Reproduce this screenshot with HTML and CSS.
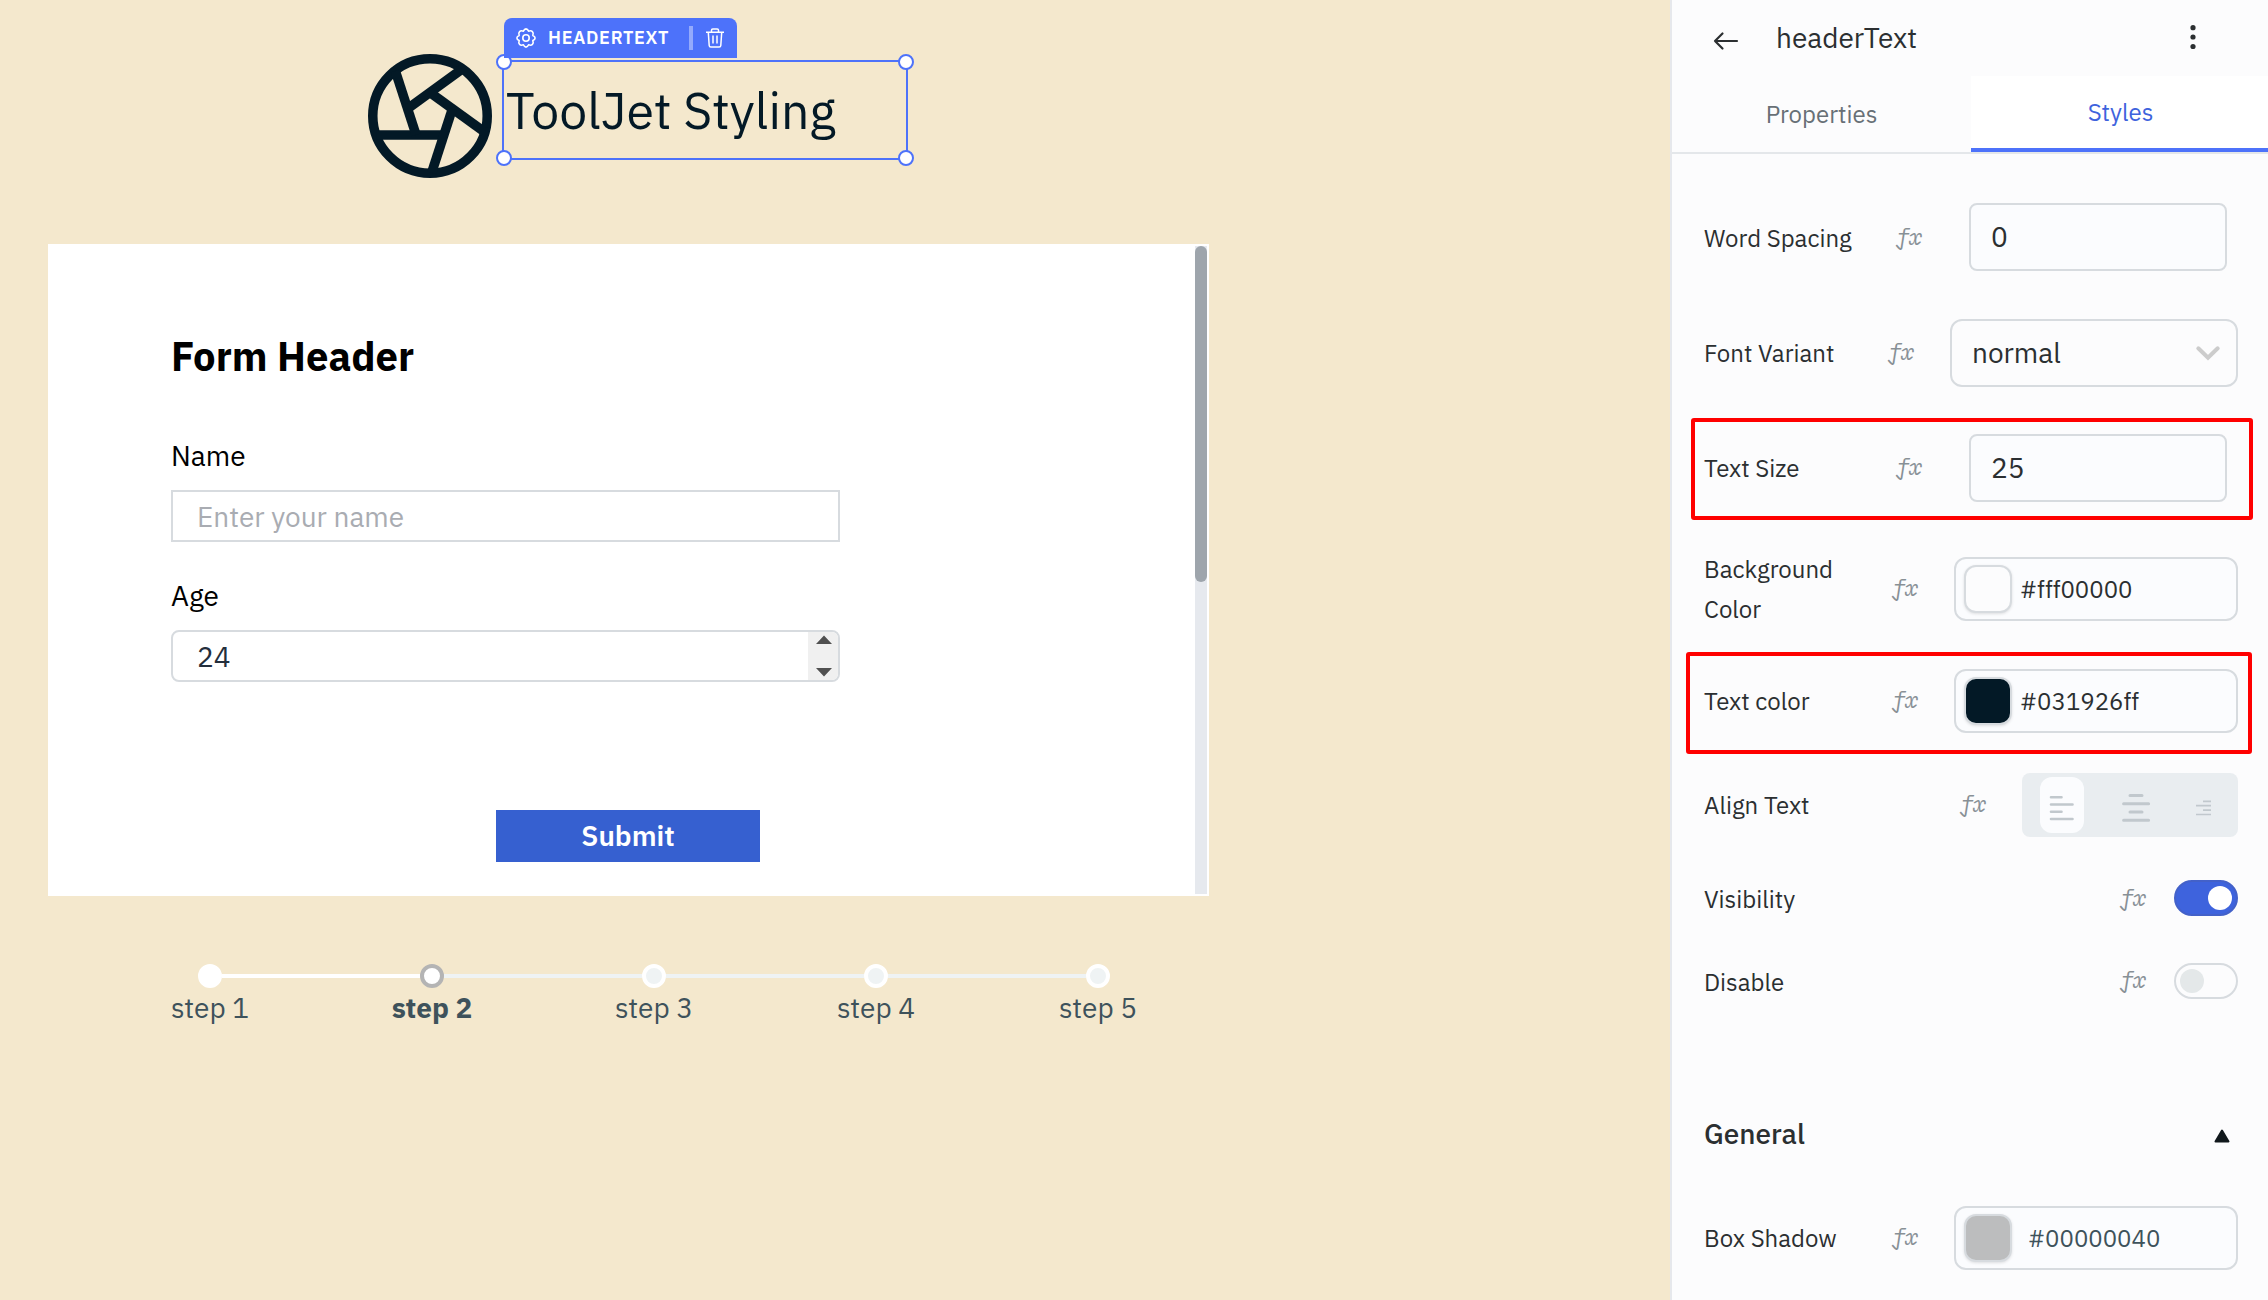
FILE: index.html
```html
<!DOCTYPE html>
<html lang="en">
<head>
<meta charset="utf-8">
<title>ToolJet Styling</title>
<link rel="stylesheet" href="styles.css">
</head>
<body>
<div class="app">
  <main class="canvas">
    <header class="brand">
      <svg class="brand-icon" viewBox="2.25 2.25 19.5 19.5" fill="none" stroke="#031926" stroke-width="1.5" stroke-linecap="butt">
        <circle cx="12" cy="12" r="9"/>
        <path d="M3.6 15h10.55"/>
        <path d="M3.6 15h10.55" transform="rotate(72 12 12)"/>
        <path d="M3.6 15h10.55" transform="rotate(144 12 12)"/>
        <path d="M3.6 15h10.55" transform="rotate(216 12 12)"/>
        <path d="M3.6 15h10.55" transform="rotate(288 12 12)"/>
      </svg>
      <div class="widget">
        <h1 class="widget-text">ToolJet Styling</h1>
        <span class="handle handle-tl"></span>
        <span class="handle handle-tr"></span>
        <span class="handle handle-bl"></span>
        <span class="handle handle-br"></span>
        <div class="tag">
          <svg class="tag-gear" viewBox="0 0 20 20" fill="none" stroke="#fff" stroke-width="1.6" stroke-linejoin="round">
            <path d="M10 .9Q11.600 1 12.600 3.200 15 2.200 16.400 3.600 17.800 5 16.800 7.400 19.100 8.400 19.100 10 19.100 11.600 16.800 12.600 17.800 15 16.400 16.400 15 17.800 12.600 16.800 11.600 19.100 10 19.100 8.400 19.100 7.400 16.800 5 17.800 3.600 16.400 2.200 15 3.200 12.600.9 11.600.9 10 .9 8.400 3.200 7.400 2.200 5 3.600 3.600 5 2.200 7.400 3.200 8.400 1 10 .9Z"/>
            <circle cx="10" cy="10" r="3.2"/>
          </svg>
          <span class="tag-name">HEADERTEXT</span>
          <span class="tag-divider"></span>
          <svg class="tag-trash" viewBox="0 0 18 20" fill="none" stroke="#fff" stroke-width="1.5">
            <path d="M0 4.2h18M5.5 4V2.2Q5.5.9 6.800.9h4.400q1.300 0 1.300 1.300V4M2.300 4.500l.9 13q.1 1.500 1.600 1.500h8.400q1.500 0 1.600-1.500l.9-13M7 7.500v8M11 7.500v8"/>
          </svg>
        </div>
      </div>
    </header>

    <section class="form">
      <div class="form-body">
        <h2 class="form-title">Form Header</h2>
        <label class="form-label name-label">Name</label>
        <div class="form-input placeholder">Enter your name</div>
        <label class="form-label age-label">Age</label>
        <div class="form-input number">
          <span>24</span>
          <svg class="spinner" viewBox="0 0 30 48"><path d="M8 12h16L16 3.500zM8 36h16l-8 8.500z" fill="#505050"/></svg>
        </div>
        <button class="submit">Submit</button>
      </div>
      <div class="scrollbar"><div class="thumb"></div></div>
    </section>

    <ol class="steps">
      <li class="step done first"><div class="track"><i></i><b></b><i></i></div><span>step 1</span></li>
      <li class="step active"><div class="track"><i></i><b></b><i></i></div><span>step 2</span></li>
      <li class="step"><div class="track"><i></i><b></b><i></i></div><span>step 3</span></li>
      <li class="step"><div class="track"><i></i><b></b><i></i></div><span>step 4</span></li>
      <li class="step last"><div class="track"><i></i><b></b><i></i></div><span>step 5</span></li>
    </ol>
  </main>

  <aside class="inspector">
    <header class="inspector-head">
      <svg class="back" viewBox="0 0 24 18" fill="none" stroke="#2b2f31" stroke-width="2.2" stroke-linecap="round" stroke-linejoin="round"><path d="M1 9h22M8.500 1.500 1 9l7.500 7.500"/></svg>
      <span class="inspector-title">headerText</span>
      <svg class="more" viewBox="0 0 6 24" fill="#2b2f31"><circle cx="3" cy="2.700" r="2.600"/><circle cx="3" cy="12" r="2.600"/><circle cx="3" cy="21.500" r="2.600"/></svg>
    </header>
    <nav class="tabs">
      <div class="tab">Properties</div>
      <div class="tab selected">Styles</div>
    </nav>
    <div class="fields">
      <div class="row number-row low">
        <span class="label">Word Spacing</span><span class="fx">fx</span>
        <div class="box">0</div>
      </div>
      <div class="row variant-row">
        <span class="label">Font Variant</span><span class="fx">fx</span>
        <div class="box select">normal
          <svg class="chevron" viewBox="0 0 24 15" fill="none" stroke="#ccc" stroke-width="4" stroke-linecap="round"><path d="M2.300 2.300 12 11.800l9.700-9.500"/></svg>
        </div>
      </div>
      <div class="row number-row size-row">
        <span class="label">Text Size</span><span class="fx">fx</span>
        <div class="box">25</div>
      </div>
      <div class="row color-row background-row">
        <span class="label">Background<br>Color</span><span class="fx">fx</span>
        <div class="box color"><span class="swatch clear"></span><span>#fff00000</span></div>
      </div>
      <div class="row color-row text-row">
        <span class="label">Text color</span><span class="fx">fx</span>
        <div class="box color"><span class="swatch ink"></span><span>#031926ff</span></div>
      </div>
      <div class="row align-row">
        <span class="label">Align Text</span><span class="fx">fx</span>
        <div class="align">
          <span class="align-option on"><svg width="26" height="26" viewBox="0 0 26 26" stroke="#c1c8cd" stroke-width="2.600" stroke-linecap="round"><path d="M2 2.200h10.500M2 9.500h21.500M2 16.800h10.500M2 24h21.500"/></svg></span>
          <svg class="align-center" width="28" height="28" viewBox="0 0 28 28" stroke="#c1c8cd" stroke-width="3" stroke-linecap="round"><path d="M8 1.600h12M1.600 9.800h25M8 18h12M1.600 26.200h25"/></svg>
          <svg class="align-right" width="15" height="16" viewBox="0 0 15 16" stroke="#c1c8cd" stroke-width="1.700"><path d="M7 1.300h8M0 5.700h15M7 10.100h8M0 14.500h15"/></svg>
        </div>
      </div>
      <div class="row toggle-row visibility-row low">
        <span class="label">Visibility</span><span class="fx">fx</span>
        <span class="toggle on"><i></i></span>
      </div>
      <div class="row toggle-row disable-row">
        <span class="label">Disable</span><span class="fx">fx</span>
        <span class="toggle"><i></i></span>
      </div>
      <div class="general">
        <span>General</span>
        <svg class="collapse" viewBox="0 0 16 14" fill="#11181c" stroke="#11181c" stroke-width="2" stroke-linejoin="round"><path d="M8 1.500 14.500 12.500h-13z"/></svg>
      </div>
      <div class="row color-row shadow-row">
        <span class="label">Box Shadow</span><span class="fx">fx</span>
        <div class="box color"><span class="swatch grey"></span><span>#00000040</span></div>
      </div>
    </div>
    <div class="callout callout-size"></div>
    <div class="callout callout-color"></div>
  </aside>
</div>
</body>
</html>
```
FILE: styles.css
```css
* { box-sizing: border-box; }
body { margin: 0; font-family: "IBM Plex Sans", Roboto, "Noto Sans", sans-serif; font-size: 24px; }
h1, h2, ol { margin: 0; padding: 0; }
svg { display: block; flex: none; overflow: visible; }

.app { display: flex; width: 2268px; height: 1300px; overflow: hidden; }

/* Canvas */
.canvas { width: 1670px; background: #f4e8cd; }
.brand { display: flex; height: 244px; padding: 54px 0 0 368px; gap: 10px; }
.brand-icon { width: 124px; height: 124px; }
.widget { position: relative; width: 406px; height: 100px; margin-top: 6px; border: 2px solid #4d72fa; }
.widget-text { padding: 1px 0 0 2px; font-size: 50px; line-height: 96px; font-weight: 400; color: #031926; white-space: nowrap; }
.handle { position: absolute; width: 16px; height: 16px; border: 2px solid #4d72fa; border-radius: 50%; background: #fff; }
.handle-tl { left: -8px; top: -8px; }
.handle-tr { right: -8px; top: -8px; }
.handle-bl { left: -8px; bottom: -8px; }
.handle-br { right: -8px; bottom: -8px; }
.tag { position: absolute; left: 0; top: -44px; display: flex; align-items: center; width: 233px; height: 40px; padding: 0 13px 0 12px; border-radius: 8px 8px 0 0; background: #4d72fa; }
.tag-gear { width: 20px; height: 20px; }
.tag-name { margin: -1px 0 0 12px; width: 121px; font-size: 18px; line-height: 24px; font-weight: 600; letter-spacing: .04em; color: #fff; }
.tag-divider { width: 4px; height: 24px; margin-left: 20px; background: #94aafc; }
.tag-trash { width: 18px; height: 20px; margin-left: auto; }

.form { display: flex; width: 1161px; height: 652px; margin-left: 48px; padding: 2px; background: #fff; }
.form-body { width: 1145px; padding: 90px 0 0 121px; }
.form-title { font-size: 40px; line-height: 40px; font-weight: 700; color: #000; }
.form-label { display: block; font-size: 28px; line-height: 40px; color: #000; }
.name-label { margin-top: 60px; }
.age-label { margin-top: 34px; }
.form-input { display: flex; align-items: center; width: 669px; height: 52px; margin-top: 14px; padding-left: 24px; border: 2px solid #d7dbdf; font-size: 28px; line-height: 30px; }
.placeholder { padding-top: 2px; color: #a9acb2; }
.number { justify-content: space-between; border-radius: 8px; color: #232e3c; overflow: hidden; }
.number span { padding-top: 2px; }
.spinner { width: 30px; height: 48px; background: #f0f0f0; }
.submit { display: block; width: 264px; height: 52px; margin: 128px 0 0 325px; padding: 0; border: 0; background: #3660d0; color: #fff; font: 600 28px/52px "IBM Plex Sans", Roboto, sans-serif; }
.scrollbar { width: 12px; height: 648px; background: #e6e9ee; }
.thumb { height: 336px; border-radius: 6px; background: #9ea5ac; }

.steps { display: flex; margin: 68px 0 0 99px; list-style: none; }
.step { width: 222px; text-align: center; font-size: 28px; line-height: 30px; color: #3e525b; }
.track { display: flex; align-items: center; margin-bottom: 5px; }
.track i { flex: 1; height: 4px; background: #eff3f4; }
.track b { width: 24px; height: 24px; border: 4px solid #fff; border-radius: 50%; background: #eff3f4; }
.first .track i:first-child, .last .track i:last-child { background: none; }
.done .track i:last-child, .done .track b, .active .track i:first-child { background: #fff; }
.active { font-weight: 700; }
.active .track b { border-color: #b4b4b4; background: #fff; }

/* Inspector */
.inspector { position: relative; width: 598px; border-left: 2px solid #e6e8ec; background: #fcfcfd; color: #2b2f31; }
.inspector-head { display: flex; align-items: center; height: 76px; padding: 0 72px 0 42px; }
.back { width: 24px; height: 18px; margin-top: 6px; }
.inspector-title { margin-left: 38px; font-size: 28px; line-height: 36px; }
.more { width: 6px; height: 24px; margin: -2px 0 0 auto; }
.tabs { display: flex; height: 78px; border-bottom: 2px solid #e4e7ea; }
.tab { width: 299px; height: 76px; line-height: 76px; text-align: center; color: #687076; }
.selected { width: 297px; padding-left: 2px; line-height: 72px; background: #fff; border-bottom: 4px solid #4d72fa; color: #3e63dd; }
.fields { padding: 49px 30px 0 32px; }
.row { display: flex; align-items: center; }
.label { flex: 1; line-height: 40px; }
.low .label { padding-top: 2px; }
.fx { width: 26px; height: 28px; margin: 0 36px 3px 0; font: italic 22px/28px "IBM Plex Mono", "DejaVu Serif", serif; letter-spacing: -.4px; color: #889096; }
.low .fx { margin-bottom: 1px; }
.box { display: flex; align-items: center; border: 2px solid #d7dbdf; font-size: 28px; line-height: 36px; }
.number-row { height: 68px; }
.number-row .fx { margin-right: 47px; }
.number-row .box { width: 258px; height: 68px; margin-right: 11px; padding-left: 20px; border-radius: 8px; background: #fbfcfe; }
.variant-row { height: 68px; margin-top: 48px; }
.select { justify-content: space-between; width: 288px; height: 68px; padding: 0 16px 0 20px; border-radius: 12px; }
.chevron { width: 24px; height: 15px; }
.size-row { margin-top: 47px; }
.color-row { height: 64px; }
.background-row { margin-top: 55px; }
.text-row { margin-top: 48px; }
.color { width: 284px; height: 64px; padding-left: 8px; border-radius: 12px; background: #fbfcfe; font-size: 24px; }
.swatch { width: 48px; height: 48px; margin-right: 8px; border: 2px solid #d7dbdf; border-radius: 12px; box-shadow: 0 1px 3px rgba(0, 0, 0, .12); }
.clear { background: #fcfcfd; }
.ink { background: #031926; }
.grey { background: #bcbdbe; }
.align-row { height: 64px; margin-top: 40px; }
.align { display: flex; align-items: center; width: 216px; height: 64px; padding-left: 18px; border-radius: 8px; background: #e9edf0; }
.align-option { display: flex; align-items: center; justify-content: center; width: 44px; height: 56px; border-radius: 12px; background: #fbfcfe; }
.align-option svg { margin-top: 6px; }
.align-center { margin: 6px 0 0 38px; }
.align-right { margin: 5px 0 0 46px; }
.toggle-row { height: 36px; }
.toggle-row .fx { margin-right: 28px; }
.visibility-row { margin-top: 43px; }
.disable-row { margin-top: 47px; }
.disable-row .label { padding-top: 2px; }
.toggle { display: flex; align-items: center; width: 64px; height: 36px; padding: 0 4px; border: 2px solid #d7dbdf; border-radius: 18px; }
.toggle i { width: 24px; height: 24px; border-radius: 50%; background: #e4e8e9; }
.toggle.on { justify-content: flex-end; border-color: #4361c9; background: #3e63dd; }
.toggle.on i { background: #fff; }
.general { display: flex; align-items: center; justify-content: space-between; height: 44px; margin-top: 113px; padding-right: 8px; font-size: 28px; line-height: 42px; font-weight: 500; }
.collapse { width: 16px; height: 14px; margin-top: 4px; }
.shadow-row { margin-top: 50px; }
.shadow-row .swatch { margin-right: 16px; }
.shadow-row .color { color: #3e525b; }

.callout { position: absolute; height: 102px; border: 4px solid #f00; border-radius: 3px; }
.callout-size { left: 19px; top: 418px; width: 562px; }
.callout-color { left: 14px; top: 652px; width: 566px; }
```
